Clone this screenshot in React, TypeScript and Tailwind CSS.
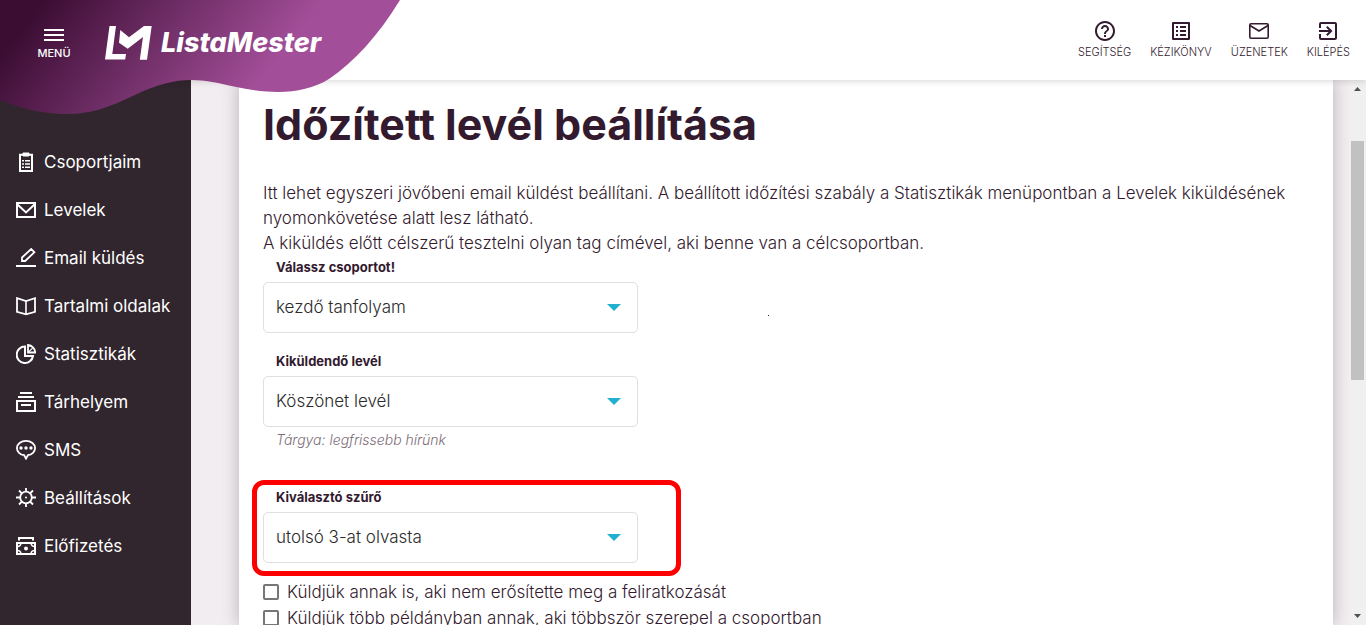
import type { ReactNode } from "react";
import { MdExitToApp, MdHelpOutline, MdOutlineListAlt } from "react-icons/md";

const MailIcon = ({ size }: { size: number }) => (
  <svg
    width={size}
    height={size}
    viewBox="0 0 24 24"
    fill="none"
    stroke="currentColor"
    strokeWidth="1.6"
  >
    <rect x="2.8" y="4.8" width="18.400" height="14.400" rx="1.200" />
    <path d="M3 6.500 12 12l9-5.500" />
  </svg>
);

const topLinks = [
  { label: "SEGÍTSÉG", icon: MdHelpOutline },
  { label: "KÉZIKÖNYV", icon: MdOutlineListAlt },
  { label: "ÜZENETEK", icon: MailIcon },
  { label: "KILÉPÉS", icon: MdExitToApp },
];

const menuItems: { label: string; icon: ReactNode }[] = [
  {
    label: "Csoportjaim",
    icon: (
      <>
        <path d="M4 2.8h12v16.2H4z" />
        <path d="M7 1h6v3H7z" fill="currentColor" strokeWidth="1" />
        <path d="M6 8.8h2M9 8.8h5M6 12h2M9 12h5M6 15.2h2M9 15.2h5" strokeWidth="1.6" />
      </>
    ),
  },
  {
    label: "Levelek",
    icon: (
      <>
        <path d="M1 3h18v14H1z" />
        <path d="M1.5 4.5 10 12.5l8.5-8" />
      </>
    ),
  },
  {
    label: "Email küldés",
    icon: (
      <>
        <path d="M6 9.5 15.2 1l3.2 3.2L9.200 13H6z" strokeWidth="1.8" />
        <path d="M0 18h20" />
      </>
    ),
  },
  {
    label: "Tartalmi oldalak",
    icon: (
      <>
        <path d="M1 2.2 10 5l9-2.8v13.6L10 18.3 1 15.8z" strokeWidth="1.8" />
        <path d="M10 5v13" strokeWidth="1.6" />
      </>
    ),
  },
  {
    label: "Statisztikák",
    icon: (
      <>
        <path d="M9 2.6A8.200 8.200 0 1 0 17 12H9z" />
        <path d="M12 1v7.5h7.200A8 8 0 0 0 12 1z" strokeWidth="1.8" />
        <path d="m12 8.5 4.600-4.400" strokeWidth="1.2" />
      </>
    ),
  },
  {
    label: "Tárhelyem",
    icon: (
      <>
        <path d="M4 1h12M2 5h16" />
        <path d="M1 9h18v10H1z" />
        <path d="M5 13h10" />
      </>
    ),
  },
  {
    label: "SMS",
    icon: (
      <>
        <path d="M10 .9c5 0 9.1 3.1 9.1 7.2 0 3.7-3.2 6.6-7.2 7.1L10 18.6l-1.9-3.4C4.1 14.7.9 11.8.9 8.1.9 4 5 .9 10 .9z" strokeWidth="1.8" />
        <circle cx="5" cy="8" r="1.7" fill="currentColor" stroke="none" />
        <circle cx="10" cy="8" r="1.7" fill="currentColor" stroke="none" />
        <circle cx="15" cy="8" r="1.7" fill="currentColor" stroke="none" />
      </>
    ),
  },
  {
    label: "Beállítások",
    icon: (
      <>
        <circle cx="10" cy="9.5" r="5.8" strokeWidth="1.8" />
        <circle cx="10" cy="9.5" r="1" fill="currentColor" stroke="none" />
        <path d="M10 0v4M10 15v4M0 9.5h4M16 9.5h4M3 2.5l3 3M17 2.5l-3 3M3 16.5l3-3M17 16.5l-3-3" strokeWidth="1.8" />
      </>
    ),
  },
  {
    label: "Előfizetés",
    icon: (
      <>
        <path d="M3 4.5V2h14v2.5M1 7h18v11H1z" />
        <circle cx="10" cy="12.5" r="2" fill="currentColor" stroke="none" />
        <path d="M1.5 10.5Q4.5 10.5 5 7.5M18.5 10.5Q15.5 10.5 15 7.5M1.5 14.5q3 0 3.5 3M18.5 14.5q-3 0-3.5 3" strokeWidth="1.5" />
      </>
    ),
  },
];

const SelectField = ({
  id,
  label,
  value,
  hint,
}: {
  id: string;
  label: string;
  value: string;
  hint?: string;
}) => (
  <div className="w-[375px]">
    <label
      htmlFor={id}
      className="mb-1 block px-[13px] text-[13px] leading-[22px] font-bold text-[#331a2e]"
    >
      {label}
    </label>
    <div className="relative">
      <select
        id={id}
        className="block h-[51px] w-full appearance-none rounded-[5px] border border-[#dfdfdf] bg-white px-3 font-light text-[#2b2b2b]"
      >
        <option>{value}</option>
      </select>
      <svg
        viewBox="0 0 14 7"
        className="pointer-events-none absolute top-[22px] right-[17px] h-[7px] w-[14px] fill-[#22b0cf]"
      >
        <path d="M0 0h14L7 7z" />
      </svg>
    </div>
    {hint && (
      <p className="px-[13px] text-sm leading-[26px] font-light text-[#7d6d79] italic">
        {hint}
      </p>
    )}
  </div>
);

const Header = () => (
  <header className="relative z-10 flex h-20 shrink-0 items-start bg-white shadow-[0_0_8px_rgba(0,0,0,0.2)]">
    <svg
      viewBox="0 0 400 115"
      className="pointer-events-none absolute top-0 left-0 h-[115px] w-[400px]"
    >
      <defs>
        <linearGradient
          id="wave"
          gradientUnits="userSpaceOnUse"
          x1="27"
          y1="22"
          x2="198"
          y2="158"
        >
          <stop offset="0" stopColor="#3b0d33" />
          <stop offset="1" stopColor="#a24e98" />
        </linearGradient>
      </defs>
      <path
        d="M0 0H400C378 36 354 62 329 79C300 97 262 94 218 83C188 77 168 80 137 94C111 106 95 114 66 114C40 114 18 107 0 100z"
        fill="url(#wave)"
      />
    </svg>
    <button
      type="button"
      className="relative mt-7 ml-[34px] flex w-10 flex-col items-center text-[11px] leading-4 font-medium text-white"
    >
      <svg viewBox="0 0 20 14" className="mb-[3px] h-[14px] w-5">
        <path d="M0 2h20M0 7h20M0 12h20" stroke="currentColor" strokeWidth="2" />
      </svg>
      MENÜ
    </button>
    <a href="#" className="relative mt-[26px] ml-[31px] flex items-center text-white">
      <svg viewBox="0 0 47 34" className="h-[34px] w-[47px] fill-current">
        <path d="M4.5 0H11L7.3 28H21l-.8 5.5H0z" />
        <path d="M15.3 4 24 11.3 39 0h7.7L42 33.7h-7.200L38 11 22.7 22.7 14 16.7z" />
      </svg>
      <span className="ml-[9px] text-[27px] leading-[34px] font-extrabold italic">
        ListaMester
      </span>
    </a>
    <nav className="mt-[19px] mr-4 ml-auto flex gap-[19px] text-[#331a2e]">
      {topLinks.map(({ label, icon: Icon }) => (
        <a
          key={label}
          href="#"
          className="flex flex-col items-center text-[11px] leading-[18px] font-light"
        >
          <Icon size={24} />
          {label}
        </a>
      ))}
    </nav>
  </header>
);

const Sidebar = () => (
  <aside className="w-[191px] shrink-0 bg-[#31252e] pt-[58px]">
    <nav>
      {menuItems.map((item) => (
        <a
          key={item.label}
          href="#"
          className="flex h-12 items-center gap-2 pl-4 leading-[26px] whitespace-nowrap text-white"
        >
          <svg
            viewBox="0 0 20 20"
            fill="none"
            stroke="currentColor"
            strokeWidth="2"
            className="size-5 shrink-0"
          >
            {item.icon}
          </svg>
          {item.label}
        </a>
      ))}
    </nav>
  </aside>
);

const Scrollbar = () => (
  <div className="z-0 flex w-[17px] shrink-0 flex-col items-center justify-between bg-[#f0f0f0] py-[7px]">
    <svg viewBox="0 0 7 4" className="h-1 w-[7px] fill-[#505050]">
      <path d="M0 4h7L3.5 0z" />
    </svg>
    <div className="mt-[50px] mb-auto h-[239px] w-[13px] bg-[#c1c1c1]" />
    <svg viewBox="0 0 7 4" className="h-1 w-[7px] fill-[#505050]">
      <path d="M0 0h7L3.5 4z" />
    </svg>
  </div>
);

const App = () => {
  return (
    <div className="flex h-screen flex-col overflow-hidden bg-[#f2edf0] font-['Inter',sans-serif] text-[17px] text-[#331a2e]">
      <Header />
      <div className="flex min-h-0 flex-1">
        <Sidebar />
        <main className="mr-4 ml-12 min-w-0 flex-1 bg-white px-6 pt-[19px] shadow-[0_0_16px_rgba(0,0,0,0.25)]">
          <h1 className="mb-8 text-[43px] leading-[50px] font-bold">
            Időzített levél beállítása
          </h1>
          <p className="leading-[25px] font-light">
            Itt lehet egyszeri jövőbeni email küldést beállítani. A beállított
            időzítési szabály a Statisztikák menüpontban a Levelek kiküldésének
            nyomonkövetése alatt lesz látható.
            <br />
            A kiküldés előtt célszerű tesztelni olyan tag címével, aki benne van
            a célcsoportban.
          </p>

          <form>
            <div className="mb-[17px] flex items-center">
              <SelectField
                id="group"
                label="Válassz csoportot!"
                value="kezdő tanfolyam"
              />
              <span className="mt-[42px] ml-[130px] size-px bg-[#331a2e]" />
            </div>
            <SelectField
              id="letter"
              label="Kiküldendő levél"
              value="Köszönet levél"
              hint="Tárgya: legfrissebb hírünk"
            />
            <div className="relative mt-[33px] mb-4">
              <SelectField
                id="filter"
                label="Kiválasztó szűrő"
                value="utolsó 3-at olvasta"
              />
              {/* highlight frame around the filter */}
              <div className="pointer-events-none absolute -top-1.5 -bottom-[13px] -left-[11px] w-[429px] rounded-xl border-[5px] border-[#fe0000]" />
            </div>
            {[
              "Küldjük annak is, aki nem erősítette meg a feliratkozását",
              "Küldjük több példányban annak, aki többször szerepel a csoportban",
            ].map((text) => (
              <label
                key={text}
                className="flex h-[26px] items-center gap-2 leading-6 font-light"
              >
                <input
                  type="checkbox"
                  className="size-4 appearance-none rounded-[2px] border-2 border-[#767676] checked:bg-[#22b0cf]"
                />
                {text}
              </label>
            ))}
          </form>
        </main>
        <Scrollbar />
      </div>
    </div>
  );
};

export default App;
